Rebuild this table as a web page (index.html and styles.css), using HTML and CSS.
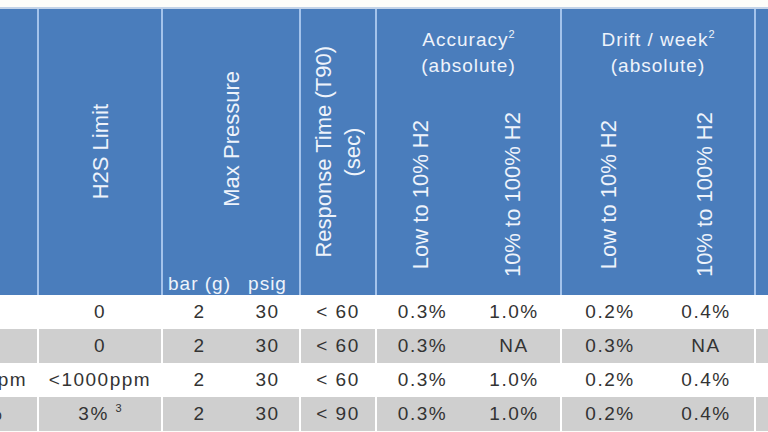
FILE: index.html
```html
<!DOCTYPE html>
<html>
<head>
<meta charset="utf-8">
<link rel="stylesheet" href="styles.css">
</head>
<body>
<div class="table">
  <div class="head">
    <div class="hc c0 span3 sep"></div>
    <div class="hc h2s span3 sep"><span class="rot">H2S Limit</span></div>
    <div class="hc maxp"><span class="rot">Max Pressure</span></div>
    <div class="hc unit bar">bar (g)</div>
    <div class="hc unit psig sep">psig</div>
    <div class="hc resp span3 sep"><span class="rot">Response Time (T90)<br>(sec)</span></div>
    <div class="hc group acc sep"><span>Accuracy<sup>2</sup><br>(absolute)</span></div>
    <div class="hc sub acc-lo"><span class="rot">Low to 10% H2</span></div>
    <div class="hc sub acc-hi sep"><span class="rot">10% to 100% H2</span></div>
    <div class="hc group drift sep"><span>Drift / week<sup>2</sup><br>(absolute)</span></div>
    <div class="hc sub drift-lo"><span class="rot">Low to 10% H2</span></div>
    <div class="hc sub drift-hi sep"><span class="rot">10% to 100% H2</span></div>
    <div class="hc c6 span3"></div>
  </div>

  <div class="row">
    <div class="cell sep"></div>
    <div class="cell sep">0</div>
    <div class="cell">2</div>
    <div class="cell sep">30</div>
    <div class="cell sep">&lt; 60</div>
    <div class="cell">0.3%</div>
    <div class="cell sep">1.0%</div>
    <div class="cell">0.2%</div>
    <div class="cell sep">0.4%</div>
    <div class="cell"></div>
  </div>
  <div class="row alt">
    <div class="cell sep"></div>
    <div class="cell sep">0</div>
    <div class="cell">2</div>
    <div class="cell sep">30</div>
    <div class="cell sep">&lt; 60</div>
    <div class="cell">0.3%</div>
    <div class="cell sep">NA</div>
    <div class="cell">0.3%</div>
    <div class="cell sep">NA</div>
    <div class="cell"></div>
  </div>
  <div class="row">
    <div class="cell sep">&lt;1000ppm</div>
    <div class="cell sep">&lt;1000ppm</div>
    <div class="cell">2</div>
    <div class="cell sep">30</div>
    <div class="cell sep">&lt; 60</div>
    <div class="cell">0.3%</div>
    <div class="cell sep">1.0%</div>
    <div class="cell">0.2%</div>
    <div class="cell sep">0.4%</div>
    <div class="cell"></div>
  </div>
  <div class="row alt">
    <div class="cell sep">100%</div>
    <div class="cell sep"><span>3%&nbsp;<sup>3</sup></span></div>
    <div class="cell">2</div>
    <div class="cell sep">30</div>
    <div class="cell sep">&lt; 90</div>
    <div class="cell">0.3%</div>
    <div class="cell sep">1.0%</div>
    <div class="cell">0.2%</div>
    <div class="cell sep">0.4%</div>
    <div class="cell"></div>
  </div>
</div>
</body>
</html>
```

FILE: styles.css
```css
html, body {
  margin: 0;
  padding: 0;
  overflow: hidden;
  background: #fdfdfa;
}

body {
  font-family: "Liberation Sans", Arial, sans-serif;
}

.table {
  margin-top: 7px;
  margin-left: -85px;
  width: max-content;
  border-top: 2px solid #c3d3e8;
}

.head,
.row {
  display: grid;
  grid-template-columns: 124px 124px 73px 65px 76px 91px 94px 96px 98px 100px;
}

.head {
  grid-template-rows: 86px 173px 27px;
  background: #4a7dbc;
  color: #eef3fb;
}

.hc {
  box-sizing: border-box;
  display: flex;
  align-items: center;
  justify-content: center;
  font-size: 19px;
  letter-spacing: 1px;
}

.hc.sep {
  border-right: 2px solid #a4c3eb;
}

.span3 { grid-row: 1 / 4; }
.c0 { grid-column: 1; }
.h2s { grid-column: 2; }
.maxp { grid-column: 3 / 5; grid-row: 1 / 3; border-right: 2px solid #a4c3eb; }
.bar { grid-column: 3; grid-row: 3; }
.psig { grid-column: 4; grid-row: 3; }
.resp { grid-column: 5; }
.acc { grid-column: 6 / 8; grid-row: 1; }
.acc-lo { grid-column: 6; grid-row: 2 / 4; }
.acc-hi { grid-column: 7; grid-row: 2 / 4; }
.drift { grid-column: 8 / 10; grid-row: 1; }
.drift-lo { grid-column: 8; grid-row: 2 / 4; }
.drift-hi { grid-column: 9; grid-row: 2 / 4; }
.c6 { grid-column: 10; }

.unit {
  align-items: flex-end;
  line-height: 19px;
  padding-bottom: 2px;
}

.group {
  text-align: center;
  line-height: 26px;
  padding-top: 2px;
}

.group sup,
.cell sup {
  font-size: 11px;
  line-height: 0;
  vertical-align: 8px;
  letter-spacing: 0;
}

.rot {
  writing-mode: vertical-rl;
  transform: rotate(180deg);
  font-size: 22px;
  letter-spacing: 0;
  line-height: 29px;
  text-align: center;
  white-space: nowrap;
}

.sub .rot {
  margin-right: 4px;
}

.row {
  height: 34px;
  background: #ffffff;
  color: #333333;
}

.row.alt {
  background: #cfcfcf;
}

.cell {
  box-sizing: border-box;
  display: flex;
  align-items: center;
  justify-content: center;
  font-size: 19px;
  letter-spacing: 1.5px;
  white-space: nowrap;
  overflow: hidden;
}

.cell.sep {
  border-right: 2px solid #ffffff;
}
```
